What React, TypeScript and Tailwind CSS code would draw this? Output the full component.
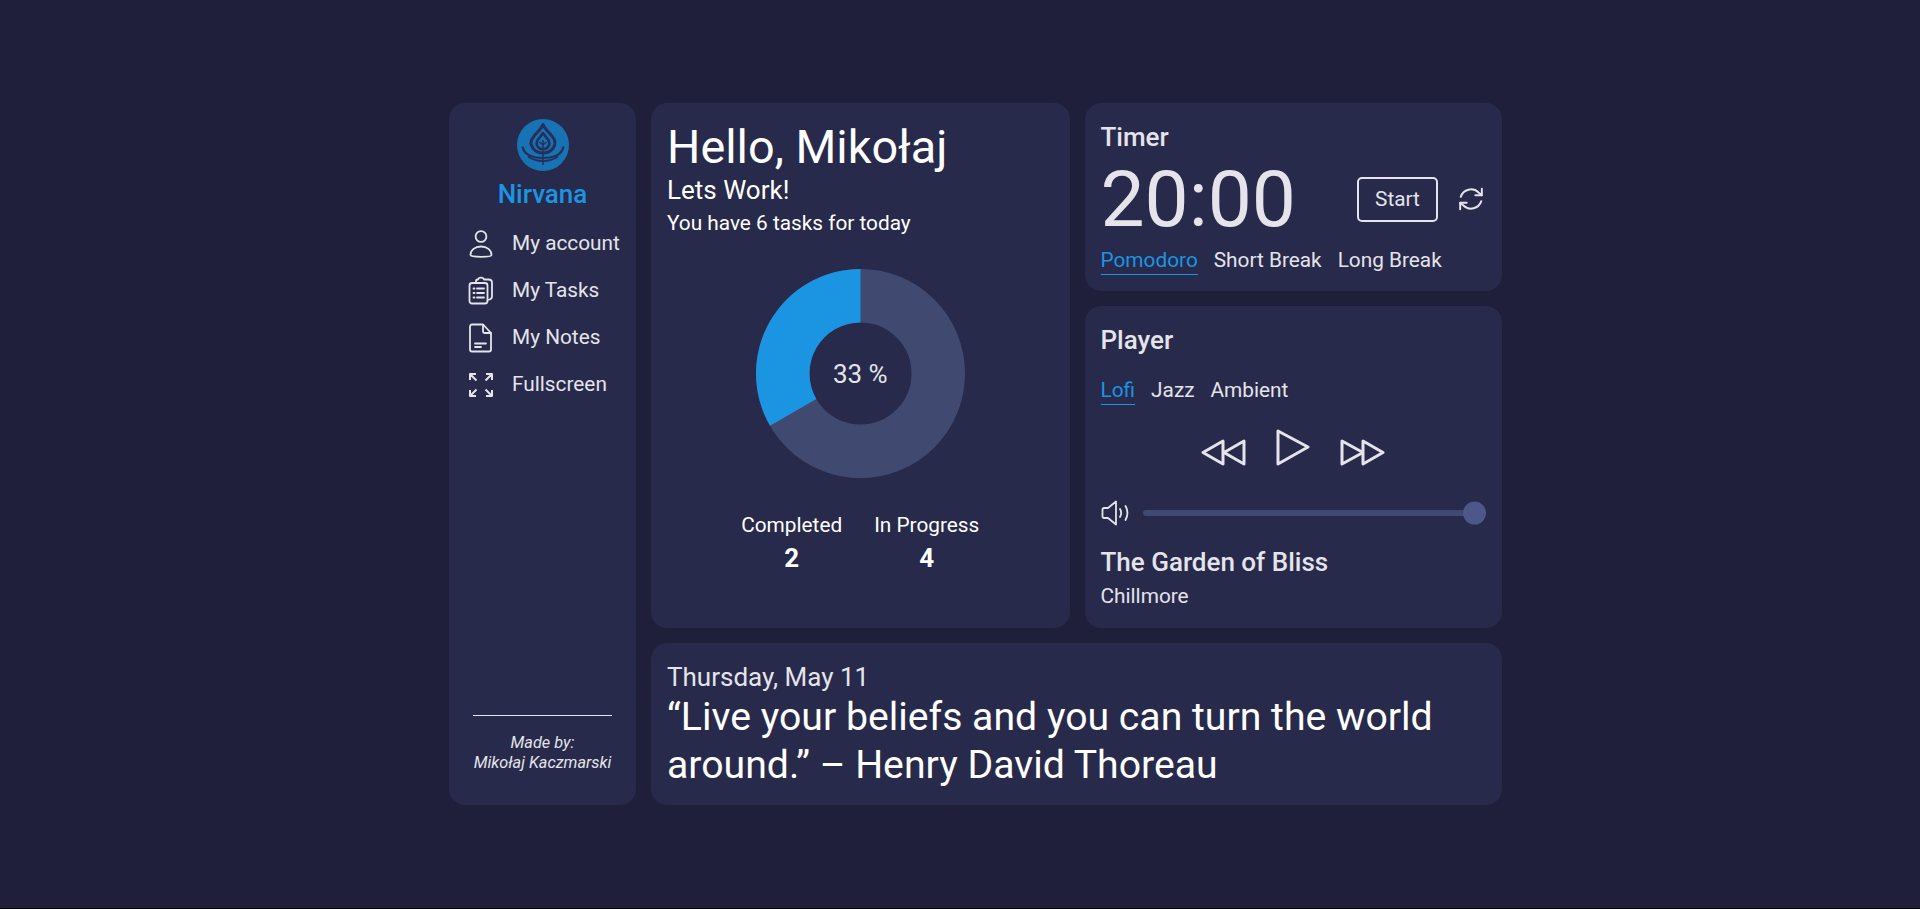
const navItems = [
  { label: 'My account', icon: UserIcon },
  { label: 'My Tasks', icon: TasksIcon },
  { label: 'My Notes', icon: NoteIcon },
  { label: 'Fullscreen', icon: ExpandIcon },
];

function UserIcon() {
  return (
    <svg width="26" height="30" viewBox="0 0 26 30" fill="none" stroke="currentColor" strokeWidth="1.8">
      <circle cx="13" cy="7.500" r="5.400" />
      <path d="M2.500 26c0-5 4.500-8.500 10.500-8.500s10.500 3.500 10.500 8.500c0 1.200-4.500 1.800-10.500 1.800s-10.500-.6-10.500-1.800z" />
    </svg>
  );
}

function TasksIcon() {
  return (
    <svg width="26" height="30" viewBox="0 0 26 30" fill="none" stroke="currentColor" strokeWidth="1.800" strokeLinecap="round" strokeLinejoin="round">
      <path d="M8 6.500V5c0-1 .5-1.500 1.500-1.500h.5C10.500 1 15.500 1 16 3.500h4.500c2 0 3.500 1 3.500 3v14c0 1.500-.8 2.500-2.500 3l-2 .5" />
      <rect x="1.500" y="7" width="18" height="20.500" rx="2.500" />
      <path d="M5.500 12.500h1M9 12.500h7M5.500 17h1M9 17h7M5.500 21.500h1M9 21.500h7" />
    </svg>
  );
}

function NoteIcon() {
  return (
    <svg width="26" height="30" viewBox="0 0 26 30" fill="none" stroke="currentColor" strokeWidth="1.800" strokeLinecap="round" strokeLinejoin="round">
      <path d="M4 1.500h10.500c1 0 1 .5 2 1.500l6 6.500c.5.5.5 1 .5 2v15c0 1.200-.8 2-2 2H4c-1.200 0-2-.8-2-2V3.500c0-1.200.8-2 2-2z" />
      <path d="M15 2v6.500c0 1 .5 1.500 1.500 1.500H23" />
      <path d="M7 20.500h11M7 24h6" />
    </svg>
  );
}

function ExpandIcon() {
  return (
    <svg width="26" height="26" viewBox="0 0 26 26" fill="none" stroke="currentColor" strokeWidth="2" strokeLinejoin="round">
      <path d="M2 8V2h6M2 2l6.500 6.500M18 2h6v6M24 2l-6.500 6.500M2 18v6h6M2 24l6.500-6.500M24 18v6h-6M24 24l-6.500-6.500" />
    </svg>
  );
}

function Logo() {
  return (
    <svg width="52" height="52" viewBox="0 0 52 52">
      <circle cx="26" cy="26" r="26" fill="#1873b5" />
      <g fill="none" stroke="#25305a" strokeLinejoin="round">
        <path strokeWidth="3" d="M26 5.500c1.500 4 5 7 8.500 11 4 4.500 4.500 9.500 1 13.500-2.500 2.800-6 4-9.500 4s-7-1.200-9.500-4c-3.500-4-3-9 1-13.500 3.500-4 7-7 8.500-11z" />
        <path strokeWidth="2.600" d="M26 14c1.500 2.500 3.500 4.500 5 6.500 2 3 1.500 6-.5 8-1.200 1.200-2.800 1.800-4.500 1.800s-3.300-.6-4.500-1.800c-2-2-2.500-5-.5-8 1.500-2 3.500-4 5-6.500z" />
        <path strokeWidth="2.200" d="M5.500 27.500c.8 4.500 3.500 7.500 7.500 9.200 4 1.600 8.500 2.300 13 2.300s9-.7 13-2.300c4-1.700 6.700-4.700 7.500-9.200" />
        <path strokeWidth="2" d="M11 37.500c4 2.800 9.500 4.500 15 4.500s11-1.700 15-4.500" />
      </g>
      <path d="M26 21v25M26 26l-3.500-3M26 26l3.500-3" stroke="#25305a" strokeWidth="1.500" fill="none" />
    </svg>
  );
}

function Donut() {
  // 33% slice from 12 o'clock, going counter clockwise
  const R = 104.500;
  const r = 51;
  const c = 104.500;
  const a = (120 * Math.PI) / 180;
  const x1 = c - R * Math.sin(a);
  const y1 = c - R * Math.cos(a);
  const x2 = c - r * Math.sin(a);
  const y2 = c - r * Math.cos(a);
  return (
    <svg width="209" height="209" viewBox="0 0 209 209">
      <circle cx={c} cy={c} r={(R + r) / 2} fill="none" stroke="#404a70" strokeWidth={R - r} />
      <path
        d={`M${c} ${c - R}A${R} ${R} 0 0 0 ${x1} ${y1}L${x2} ${y2}A${r} ${r} 0 0 1 ${c} ${c - r}Z`}
        fill="#1b95e2"
      />
    </svg>
  );
}

function Tab({ label, active }: { label: string; active?: boolean }) {
  return (
    <span className={active ? 'border-b border-[#1b95e2] text-[#1b95e2]' : 'border-b border-transparent'}>{label}</span>
  );
}

export default function App() {
  return (
    <div className="h-[909px] bg-black font-['Roboto',sans-serif]">
      <div className="flex h-[908px] items-center bg-[#1f1f3b] pl-[449px] text-[#e4e4ea]">
        <div className="grid h-[702px] w-[1053px] grid-cols-[187px_418.5px_417.5px] grid-rows-[188px_322px_162px] gap-[15px]">
          {/* Sidebar */}
          <aside className="row-span-3 flex flex-col items-center rounded-2xl bg-[#272a4a] pt-4 pb-8">
            <Logo />
            <h1 className="mt-[9px] text-[26px] leading-7 font-medium text-[#1b95e2]">Nirvana</h1>
            <nav className="mt-5 flex w-full flex-col gap-[15px] pl-[19px]">
              {navItems.map((item) => (
                <a key={item.label} className="flex h-[32px] items-center gap-[18px] text-[20.8px]">
                  <span className="flex w-[26px] justify-center">
                    <item.icon />
                  </span>
                  {item.label}
                </a>
              ))}
            </nav>
            <div className="mt-auto w-[139px] border-t border-[#e4e4ea] pt-[17px] text-center text-[16.3px] leading-5 italic">
              <p>Made by:</p>
              <p className="whitespace-nowrap">Mikołaj Kaczmarski</p>
            </div>
          </aside>

          {/* Greeting */}
          <section className="row-span-2 flex flex-col rounded-2xl bg-[#272a4a] px-4 pt-[15px] text-white">
            <h2 className="text-[46.8px] leading-[58px]">Hello, Mikołaj</h2>
            <p className="text-[26px] leading-7">Lets Work!</p>
            <p className="mt-[5px] text-[20.8px] leading-7">You have 6 tasks for today</p>
            <div className="relative mt-8 flex justify-center">
              <Donut />
              <span className="absolute top-1/2 left-1/2 -translate-x-1/2 -translate-y-1/2 text-[26px] whitespace-nowrap text-[#e4e4ea]">33 %</span>
            </div>
            <div className="mt-[33px] flex justify-center gap-8 text-[20.8px]">
              <div className="text-center">
                <p className="leading-7">Completed</p>
                <p className="mt-[5px] text-[26px] leading-7 font-bold">2</p>
              </div>
              <div className="text-center">
                <p className="leading-7">In Progress</p>
                <p className="mt-[5px] text-[26px] leading-7 font-bold">4</p>
              </div>
            </div>
          </section>

          {/* Timer */}
          <section className="rounded-2xl bg-[#272a4a] px-4 pt-[18px]">
            <h3 className="text-[26px] leading-8 font-medium">Timer</h3>
            <div className="mt-1 flex items-center">
              <span className="text-[78.5px] leading-[84px]">20:00</span>
              <button className="ml-auto h-[45px] w-[81px] rounded-[5px] border-2 border-[#e4e4ea] pt-[2px] text-[20.8px]">Start</button>
              <svg className="mr-[2px] ml-5" width="26" height="26" viewBox="0 0 24 24" fill="none" stroke="currentColor" strokeWidth="1.800" strokeLinecap="round" strokeLinejoin="round">
                <path d="M22 2.500v6h-6M2 21.500v-6h6" />
                <path d="M2.500 10a10 10 0 0 1 16.500-4l3 2.500M21.500 14a10 10 0 0 1-16.500 4L2 15.500" />
              </svg>
            </div>
            <div className="mt-[5px] flex gap-4 text-[20.8px] leading-7">
              <Tab label="Pomodoro" active />
              <Tab label="Short Break" />
              <Tab label="Long Break" />
            </div>
          </section>

          {/* Player */}
          <section className="rounded-2xl bg-[#272a4a] px-4 pt-[18px]">
            <h3 className="text-[26px] leading-8 font-medium">Player</h3>
            <div className="mt-5 flex gap-4 text-[20.8px] leading-7">
              <Tab label="Lofi" active />
              <Tab label="Jazz" />
              <Tab label="Ambient" />
            </div>
            <div className="mt-6 flex items-start justify-center gap-[30px]">
              <svg className="mt-[10px]" width="45" height="27" viewBox="0 0 45 27" fill="none" stroke="currentColor" strokeWidth="3" strokeLinejoin="round">
                <path d="M22 2L2 13.500 22 25zM43 2L23 13.500 43 25z" />
              </svg>
              <svg width="34" height="37" viewBox="0 0 34 37" fill="none" stroke="currentColor" strokeWidth="3" strokeLinejoin="round">
                <path d="M2 2l30 16L2 35z" />
              </svg>
              <svg className="mt-[10px]" width="45" height="27" viewBox="0 0 45 27" fill="none" stroke="currentColor" strokeWidth="3" strokeLinejoin="round">
                <path d="M2 2l21 11.500L2 25zM23 2l20 11.500L23 25z" />
              </svg>
            </div>
            <div className="mt-[34px] flex items-center gap-[14px]">
              <svg width="28" height="26" viewBox="0 0 28 26" fill="none" stroke="currentColor" strokeWidth="1.800" strokeLinecap="round" strokeLinejoin="round">
                <path d="M1.500 9.500c0-1 .5-1.500 1.500-1.500h4l8-6.500v23L7 18H3c-1 0-1.500-.5-1.500-1.500z" />
                <path d="M19 9c1.500 2.500 1.500 5.500 0 8M24.500 6c2.500 4.500 2.500 9.500 0 14" />
              </svg>
              <div className="relative h-[6px] flex-1 rounded-full bg-[#404a70]">
                <div className="absolute top-1/2 right-0 h-[23px] w-[23px] -translate-y-1/2 rounded-full bg-[#4d5789]" />
              </div>
            </div>
            <p className="mt-5 text-[26px] leading-8 font-medium">The Garden of Bliss</p>
            <p className="mt-1 text-[20.8px] leading-7">Chillmore</p>
          </section>

          {/* Quote */}
          <section className="col-span-2 rounded-2xl bg-[#272a4a] px-4 pt-5">
            <p className="text-[26px] leading-7">Thursday, May 11</p>
            <p className="mt-[2px] text-[39.2px] leading-[48px] text-white">“Live your beliefs and you can turn the world around.” – Henry David Thoreau</p>
          </section>
        </div>
      </div>
    </div>
  );
}
